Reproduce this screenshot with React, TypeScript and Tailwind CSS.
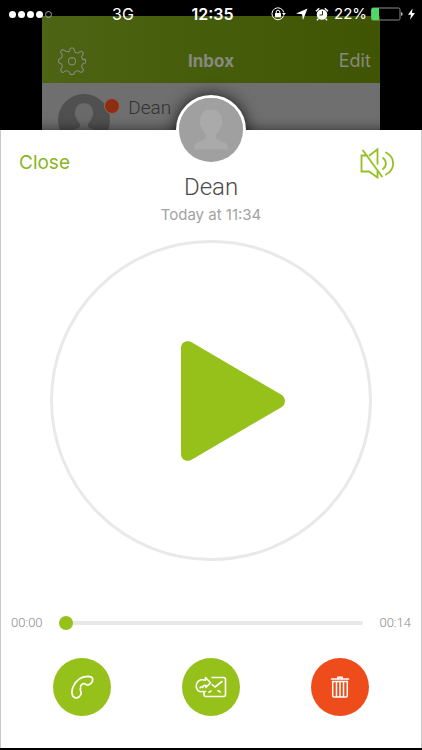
import { useState } from 'react'

const person =
  'M32 11.500c-7 0-11 4.500-10.700 10.500-1.300 1.500-.8 5 1 6.500 1 4 3 6 4.700 8v3.500c-2 3.500-8 3-11 6.500-1 1.300-1 3-1 5h34c0-2 0-3.700-1-5-3-3.500-9-3-11-6.500v-3.500c1.700-2 3.700-4 4.700-8 1.800-1.500 2.300-5 1-6.500C43 16 39 11.500 32 11.500z'

function StatusBar() {
  return (
    <div className="absolute inset-x-0 top-0 z-20 flex h-7 items-center pl-[9px] pr-[6px] text-white">
      <div className="flex flex-1 items-center gap-[60px]">
        <div className="flex gap-[2px]">
          <span className="h-[7px] w-[7px] rounded-full bg-white" />
          <span className="h-[7px] w-[7px] rounded-full bg-white" />
          <span className="h-[7px] w-[7px] rounded-full bg-white" />
          <span className="h-[7px] w-[7px] rounded-full bg-white" />
          <span className="h-[7px] w-[7px] rounded-full border border-gray-400" />
        </div>
        <span className="text-[16px]">3G</span>
      </div>
      <span className="text-[16px] font-semibold">12:35</span>
      <div className="flex flex-1 items-center justify-end gap-1">
        <svg viewBox="0 0 16 16" className="mr-1 h-4 w-4" fill="none" stroke="currentColor">
          <path d="M13.700 9.500A6 6 0 1 1 13.800 6.500" />
          <path d="M12 7h3.800L13.900 9.600z" fill="currentColor" stroke="none" />
          <rect x="5" y="7" width="6" height="4.200" rx=".5" fill="currentColor" stroke="none" />
          <path d="M6.200 7.500V6a1.800 1.800 0 0 1 3.600 0v1.500" />
        </svg>
        <svg viewBox="0 0 16 16" className="h-4 w-4" fill="currentColor">
          <path d="M13.500 2.500 9 14 8 8.300 2 7.500z" />
        </svg>
        <svg viewBox="0 0 16 16" className="h-4 w-4" fill="currentColor">
          <circle cx="8" cy="8.500" r="5.300" />
          <path d="M2 5.200 5.200 2.300M14 5.200l-3.200-2.900M4.300 12.800 3 14.300M11.700 12.800l1.300 1.500" stroke="currentColor" strokeWidth="1.500" />
          <path d="M8.500 5v4H5.500" fill="none" stroke="#2c3a08" />
        </svg>
        <span className="text-[15px]">22%</span>
        <svg viewBox="0 0 32 14" className="h-[14px] w-8">
          <rect x=".5" y="1" width="28.500" height="12" rx="1.500" fill="none" stroke="#8b8b8b" />
          <path d="M2 1h6v12H2a1.500 1.500 0 0 1-1.500-1.500v-9A1.500 1.500 0 0 1 2 1z" fill="#4cd964" />
          <path d="M30.300 5c1.600.7 1.600 3.300 0 4z" fill="#fff" />
        </svg>
        <svg viewBox="0 0 9 14" className="h-[14px] w-[9px]" fill="currentColor">
          <path d="M5.500 1.500 1 7.700h3L3 12.800 8 6H5z" />
        </svg>
      </div>
    </div>
  )
}

function Inbox() {
  return (
    <div className="mx-auto mt-4 h-[114px] w-4/5 overflow-hidden bg-[#6f6f6f]">
      <div className="flex h-[67px] items-end justify-between bg-linear-to-r from-[#4c6413] to-[#3f5503] px-[9px] pb-2 text-[#87897f]">
        <button aria-label="Settings" className="flex h-7 flex-1 items-center">
          <svg viewBox="0 0 28 28" className="ml-[7px] h-7 w-7" fill="none" stroke="currentColor" strokeWidth="1.100" strokeLinejoin="round">
            <path d="M11.300 4.600C12 3.500 11.700 1 13 1h2c1.300 0 1 2.500 1.700 3.600.8.900 2.200 1.500 3.400 1.300 1.200-.2 2.700-2.300 3.700-1.500l1.400 1.400c.9 1-1.200 2.500-1.400 3.700-.2 1.200.4 2.600 1.300 3.400C26 12 28 11.800 27.500 13v2c.4 1.300-1.500 1-2.400 1.700-.9.8-1.500 2.200-1.300 3.400.2 1.200 2.300 2.700 1.500 3.700l-1.500 1.400c-1 .9-2.500-1.200-3.700-1.400-1.200-.2-2.600.4-3.400 1.300C16 26 16.300 27.500 15 27.500h-2c-1.300 0-1-1.500-1.700-2.400-.8-.9-2.200-1.500-3.400-1.300-1.200.2-2.700 2.300-3.700 1.500l-1.400-1.500c-.9-1 1.200-2.500 1.400-3.700.2-1.200-.4-2.600-1.300-3.400C2 16 .5 16.300.6 15v-2c0-1.300 1.400-1 2.300-1.700.9-.8 1.500-2.200 1.300-3.400C4 6.700 1.900 5.200 2.800 4.200l1.400-1.400c1-.9 2.500 1.200 3.700 1.400 1.200.3 2.600 1.200 3.400.4z" />
            <circle cx="14" cy="14.200" r="3.600" />
          </svg>
        </button>
        <h1 className="text-[17px] font-bold leading-7">Inbox</h1>
        <button className="h-7 flex-1 text-right text-[18px] leading-7">Edit</button>
      </div>
      <div className="flex pl-4 pt-[11px]">
        <div className="relative">
          <svg viewBox="0 0 64 64" className="h-[52px] w-[52px] rounded-full bg-[#505050]" fill="#6a6a6a">
            <path d={person} />
          </svg>
          <span className="absolute -right-[10px] top-1 h-4 w-4 rounded-full border border-[#8a6a60] bg-[#8d2d12]" />
        </div>
        <span className="ml-[18px] font-[Roboto] text-[19px] font-light leading-7 text-[#333]">Dean</span>
      </div>
    </div>
  )
}

export default function App() {
  const [position, setPosition] = useState(0)

  return (
    <div className="relative flex min-h-screen flex-col bg-black pb-[2px] font-['Inter',sans-serif]">
      <StatusBar />
      <Inbox />

      <main className="relative z-10 flex flex-1 flex-col border-x border-[#c8c8c8] bg-white shadow-[0_0_12px_rgba(0,0,0,0.6)]">
        {/* Avatar straddles the top edge of the sheet */}
        <div className="absolute -top-[35px] left-1/2 h-[70px] w-[70px] -translate-x-1/2 rounded-full border-[3px] border-white bg-[#a0a0a0] shadow-[0_0_16px_rgba(0,0,0,0.8)] [clip-path:inset(-30px_-30px_35px_-30px)]" />
        <svg viewBox="0 0 64 64" className="absolute -top-8 left-1/2 h-16 w-16 -translate-x-1/2 rounded-full bg-[#a0a0a0]" fill="#aaaaaa">
          <path d={person} />
        </svg>

        <header className="flex items-start justify-between px-[18px] pt-[17px]">
          <button className="flex-1 text-left text-[19px] leading-8 text-[#8ab522]">Close</button>
          <div className="pt-[26px] text-center">
            <h2 className="font-[Roboto] text-[24px] font-light leading-7 text-[#4a4a4a]">Dean</h2>
            <p className="mt-[3px] text-[15px] leading-[22px] text-[#a3a3a3]">Today at 11:34</p>
          </div>
          <button aria-label="Speaker off" className="flex flex-1 justify-end text-[#95c11f]">
            <svg viewBox="0 0 36 32" className="mr-2 h-8 w-9" fill="none" stroke="currentColor" strokeWidth="1.800" strokeLinecap="round">
              <path d="M8 8.500H2.500v16H10l8.500 6V24M10.500 8.500l8-6.200v14.500M4 3.500l19 26" />
              <path d="M24 11c3.800 2.500 3.800 8.500 0 11M27 5.500c9.500 5 9.500 17 0 22" />
            </svg>
          </button>
        </header>

        <button
          aria-label="Play"
          className="mx-auto mt-[14px] flex aspect-square w-[calc(76%+2px)] items-center justify-center rounded-full border-[3px] border-[#e9e9e9]"
        >
          <svg viewBox="0 0 104 120" className="ml-11 h-[120px] w-[104px]" fill="#95c11a">
            <path d="M0 7C0 1 6 -1.500 11 1.500L100 53.500C105.300 56.500 105.300 63.500 100 66.500L11 118.500C6 121.500 0 119 0 113z" />
          </svg>
        </button>

        <div className="mt-[52px] flex items-center gap-4 px-[10px] font-[Roboto] text-[13px] leading-5 text-[#8c8c8c]">
          <span className="font-light">00:00</span>
          <input
            type="range"
            aria-label="Position"
            min={0}
            max={14}
            value={position}
            onChange={(e) => setPosition(Number(e.target.value))}
            className="h-1 min-w-0 flex-1 appearance-none rounded-full bg-[#e8e8e8] [&::-webkit-slider-thumb]:h-[14px] [&::-webkit-slider-thumb]:w-[14px] [&::-webkit-slider-thumb]:appearance-none [&::-webkit-slider-thumb]:rounded-full [&::-webkit-slider-thumb]:bg-[#95c11a]"
          />
          <span className="font-light">00:14</span>
        </div>

        <div className="mt-[25px] flex justify-between px-[52px] pb-8 text-white">
          <button aria-label="Call" className="flex h-[58px] w-[58px] items-center justify-center rounded-full bg-[#95c11a]">
            <svg viewBox="0 0 24 24" className="h-6 w-6" fill="none" stroke="currentColor" strokeWidth="1.700" strokeLinecap="round" strokeLinejoin="round">
              <path d="M10.500 13.500C9.500 15 11.700 16.500 11 19c-1 3-3.500 4.500-6 3.600-3.500-1.200-3.800-6.500-1.800-11C6 5.500 11.500 1.500 17.500 1.300c3 0 5.200 1 5.200 3.200 0 2.500-2 5.200-4.700 5.500-2 .2-2.500-1.500-4.200-1.500-1.800.3-3 1.700-3.300 3.300" />
            </svg>
          </button>
          <button aria-label="Forward message" className="flex h-[58px] w-[58px] items-center justify-center rounded-full bg-[#95c11a]">
            <svg viewBox="0 0 32 24" className="h-6 w-8" fill="none" stroke="currentColor" strokeWidth="1.600" strokeLinecap="round" strokeLinejoin="round">
              <path d="M17 2.500h11.500c1.200 0 2 .8 2 2v15c0 1.200-.8 2-2 2H11c-1.200 0-2-.8-2-2v-2" />
              <path d="M17 9.500l3 2.500L27 6.500M16 16l-2 1.200M23 15.500l2.200 1.500" />
              <path d="M7.500 16.500C3.500 17.500.9 14 1.200 10.500 1.500 6.500 5 4 9 5l1.500.2V2.500l5 5.300-4.600 4.700V10.500c-2-.5-3 .5-3.200 2-1.200-.8-2.200-.6-2.700.3M7.500 16.500h3" />
            </svg>
          </button>
          <button aria-label="Delete" className="flex h-[58px] w-[58px] items-center justify-center rounded-full bg-[#ee4d1b]">
            <svg viewBox="0 0 20 24" className="h-6 w-5" fill="none" stroke="currentColor" strokeWidth="1.500" strokeLinecap="round">
              <path d="M1.500 4h17M2.700 6.500h14.600v14.300c0 .7-.4 1.200-1.200 1.200H3.900c-.8 0-1.200-.5-1.200-1.200zM6.500 7v14.500M10 7v14.500M13.500 7v14.500" />
              <path d="M8 3.500V2.300h4v1.200" strokeWidth="1.800" />
            </svg>
          </button>
        </div>
      </main>
    </div>
  )
}
